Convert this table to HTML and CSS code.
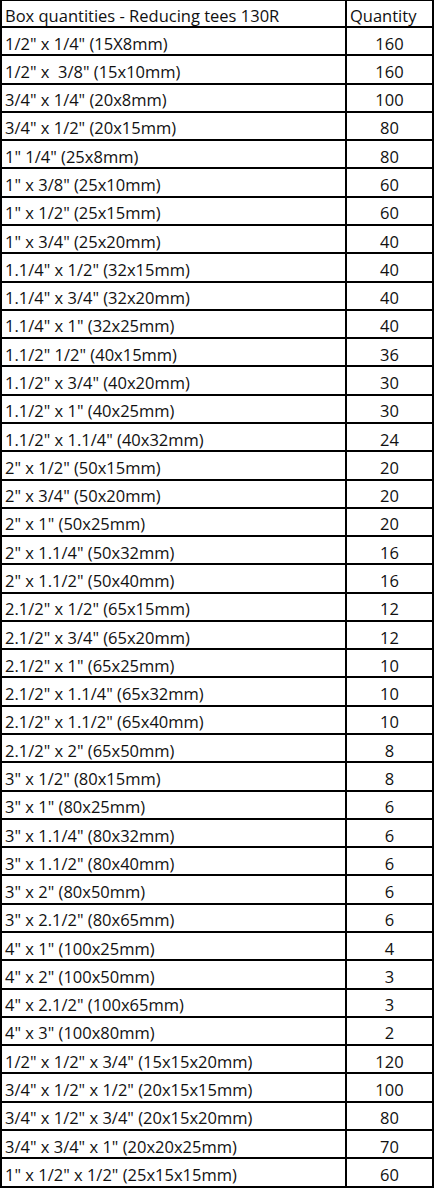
FILE: index.html
```html
<!DOCTYPE html>
<html>
<head>
<meta charset="utf-8">
<link rel="stylesheet" href="styles.css">
</head>
<body>
<table class="box-table">
  <thead>
    <tr><th class="desc">Box quantities - Reducing tees 130R</th><th class="qty-head">Quantity</th></tr>
  </thead>
  <tbody>
    <tr><td class="desc">1/2" x 1/4" (15X8mm)</td><td class="qty">160</td></tr>
    <tr><td class="desc">1/2" x&nbsp; 3/8" (15x10mm)</td><td class="qty">160</td></tr>
    <tr><td class="desc">3/4" x 1/4" (20x8mm)</td><td class="qty">100</td></tr>
    <tr><td class="desc">3/4" x 1/2" (20x15mm)</td><td class="qty">80</td></tr>
    <tr><td class="desc">1" 1/4" (25x8mm)</td><td class="qty">80</td></tr>
    <tr><td class="desc">1" x 3/8" (25x10mm)</td><td class="qty">60</td></tr>
    <tr><td class="desc">1" x 1/2" (25x15mm)</td><td class="qty">60</td></tr>
    <tr><td class="desc">1" x 3/4" (25x20mm)</td><td class="qty">40</td></tr>
    <tr><td class="desc">1.1/4" x 1/2" (32x15mm)</td><td class="qty">40</td></tr>
    <tr><td class="desc">1.1/4" x 3/4" (32x20mm)</td><td class="qty">40</td></tr>
    <tr><td class="desc">1.1/4" x 1" (32x25mm)</td><td class="qty">40</td></tr>
    <tr><td class="desc">1.1/2" 1/2" (40x15mm)</td><td class="qty">36</td></tr>
    <tr><td class="desc">1.1/2" x 3/4" (40x20mm)</td><td class="qty">30</td></tr>
    <tr><td class="desc">1.1/2" x 1" (40x25mm)</td><td class="qty">30</td></tr>
    <tr><td class="desc">1.1/2" x 1.1/4" (40x32mm)</td><td class="qty">24</td></tr>
    <tr><td class="desc">2" x 1/2" (50x15mm)</td><td class="qty">20</td></tr>
    <tr><td class="desc">2" x 3/4" (50x20mm)</td><td class="qty">20</td></tr>
    <tr><td class="desc">2" x 1" (50x25mm)</td><td class="qty">20</td></tr>
    <tr><td class="desc">2" x 1.1/4" (50x32mm)</td><td class="qty">16</td></tr>
    <tr><td class="desc">2" x 1.1/2" (50x40mm)</td><td class="qty">16</td></tr>
    <tr><td class="desc">2.1/2" x 1/2" (65x15mm)</td><td class="qty">12</td></tr>
    <tr><td class="desc">2.1/2" x 3/4" (65x20mm)</td><td class="qty">12</td></tr>
    <tr><td class="desc">2.1/2" x 1" (65x25mm)</td><td class="qty">10</td></tr>
    <tr><td class="desc">2.1/2" x 1.1/4" (65x32mm)</td><td class="qty">10</td></tr>
    <tr><td class="desc">2.1/2" x 1.1/2" (65x40mm)</td><td class="qty">10</td></tr>
    <tr><td class="desc">2.1/2" x 2" (65x50mm)</td><td class="qty">8</td></tr>
    <tr><td class="desc">3" x 1/2" (80x15mm)</td><td class="qty">8</td></tr>
    <tr><td class="desc">3" x 1" (80x25mm)</td><td class="qty">6</td></tr>
    <tr><td class="desc">3" x 1.1/4" (80x32mm)</td><td class="qty">6</td></tr>
    <tr><td class="desc">3" x 1.1/2" (80x40mm)</td><td class="qty">6</td></tr>
    <tr><td class="desc">3" x 2" (80x50mm)</td><td class="qty">6</td></tr>
    <tr><td class="desc">3" x 2.1/2" (80x65mm)</td><td class="qty">6</td></tr>
    <tr><td class="desc">4" x 1" (100x25mm)</td><td class="qty">4</td></tr>
    <tr><td class="desc">4" x 2" (100x50mm)</td><td class="qty">3</td></tr>
    <tr><td class="desc">4" x 2.1/2" (100x65mm)</td><td class="qty">3</td></tr>
    <tr><td class="desc">4" x 3" (100x80mm)</td><td class="qty">2</td></tr>
    <tr><td class="desc">1/2" x 1/2" x 3/4" (15x15x20mm)</td><td class="qty">120</td></tr>
    <tr><td class="desc">3/4" x 1/2" x 1/2" (20x15x15mm)</td><td class="qty">100</td></tr>
    <tr><td class="desc">3/4" x 1/2" x 3/4" (20x15x20mm)</td><td class="qty">80</td></tr>
    <tr><td class="desc">3/4" x 3/4" x 1" (20x20x25mm)</td><td class="qty">70</td></tr>
    <tr><td class="desc">1" x 1/2" x 1/2" (25x15x15mm)</td><td class="qty">60</td></tr>
  </tbody>
</table>
</body>
</html>
```
FILE: styles.css
```css
html, body {
  margin: 0;
  padding: 0;
  background: #ffffff;
}
.box-table {
  border-collapse: collapse;
  width: 434px;
  height: 1188px;
  table-layout: fixed;
  font-family: "Open Sans", "Noto Sans", sans-serif;
  font-size: 16.5px;
  color: #111111;
}
.box-table th, .box-table td {
  border: 2px solid #000000;
  padding: 5px 0 0 3px;
  font-weight: normal;
  white-space: nowrap;
  overflow: hidden;
  text-align: left;
  line-height: 20px;
}
.box-table th.desc, .box-table td.desc {
  width: 340px;
}
.box-table th {
  border-top: 1px solid #000000;
}
.box-table td.qty {
  text-align: center;
  padding-left: 0;
}
```
